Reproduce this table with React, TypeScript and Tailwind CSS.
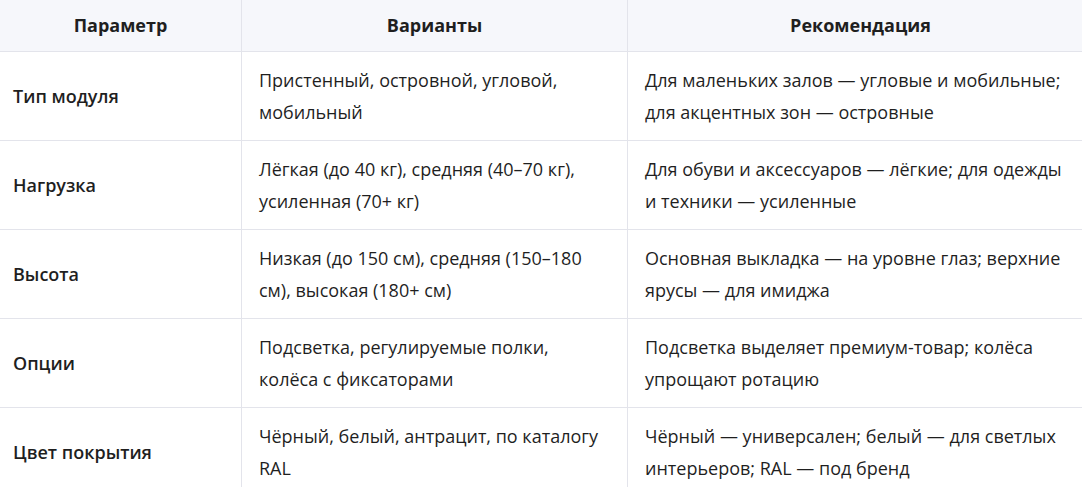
import React from "react";

interface Row {
  param: string;
  variants: string;
  advice: string;
}

const rows: Row[] = [
  {
    param: "Тип модуля",
    variants: "Пристенный, островной, угловой, мобильный",
    advice: "Для маленьких залов — угловые и мобильные; для акцентных зон — островные",
  },
  {
    param: "Нагрузка",
    variants: "Лёгкая (до 40 кг), средняя (40–70 кг), усиленная (70+ кг)",
    advice: "Для обуви и аксессуаров — лёгкие; для одежды и техники — усиленные",
  },
  {
    param: "Высота",
    variants: "Низкая (до 150 см), средняя (150–180 см), высокая (180+ см)",
    advice: "Основная выкладка — на уровне глаз; верхние ярусы — для имиджа",
  },
  {
    param: "Опции",
    variants: "Подсветка, регулируемые полки, колёса с фиксаторами",
    advice: "Подсветка выделяет премиум-товар; колёса упрощают ротацию",
  },
  {
    param: "Цвет покрытия",
    variants: "Чёрный, белый, антрацит, по каталогу RAL",
    advice: "Чёрный — универсален; белый — для светлых интерьеров; RAL — под бренд",
  },
];

export default function App() {
  return (
    <div
      className="w-[1082px] h-[487px] overflow-hidden bg-white text-[#1f1f1f]"
      style={{ fontFamily: '"Open Sans", "Noto Sans", sans-serif' }}
    >
      <div className="grid grid-cols-[242px_386px_465px] w-[1093px]">
        {/* header */}
        <div className="h-[52px] flex items-center justify-center bg-[#f6f7fb] border-b border-r border-[#e3e4eb] text-[18px] font-bold">
          Параметр
        </div>
        <div className="h-[52px] flex items-center justify-center bg-[#f6f7fb] border-b border-r border-[#e3e4eb] text-[18px] font-bold">
          Варианты
        </div>
        <div className="h-[52px] flex items-center justify-center bg-[#f6f7fb] border-b border-[#e3e4eb] text-[18px] font-bold">
          Рекомендация
        </div>

        {rows.map((r, i) => (
          <React.Fragment key={i}>
            <div className="h-[89px] flex items-center pl-[13px] pr-4 border-b border-r border-[#e3e4eb] text-[18px] font-semibold">
              {r.param}
            </div>
            <div className="h-[89px] flex items-center pl-[17px] pr-[16px] border-b border-r border-[#e3e4eb] text-[18px] leading-[32px]">
              <span>{r.variants}</span>
            </div>
            <div className="h-[89px] flex items-center pl-[17px] pr-[16px] border-b border-[#e3e4eb] text-[18px] leading-[32px]">
              <span>{r.advice}</span>
            </div>
          </React.Fragment>
        ))}
      </div>
    </div>
  );
}
